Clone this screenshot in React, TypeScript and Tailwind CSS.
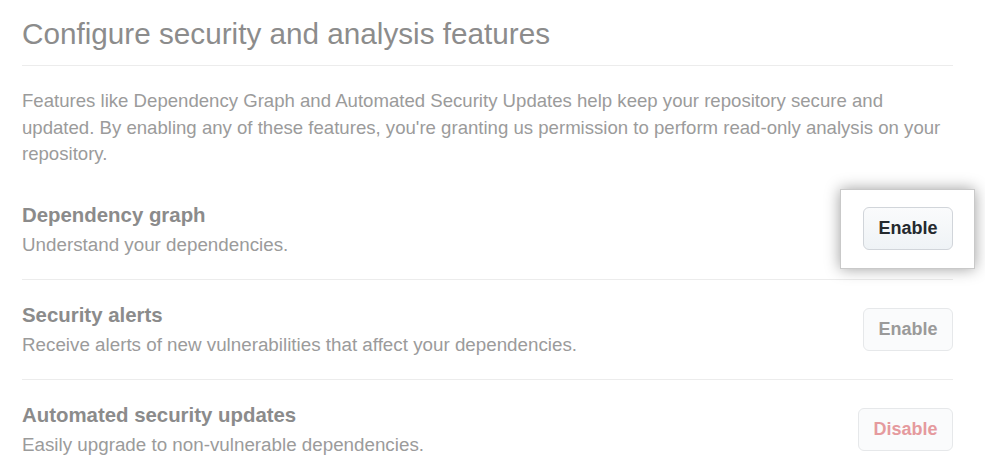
import React from 'react';

const features = [
  {
    title: 'Dependency graph',
    desc: 'Understand your dependencies.',
    action: 'Enable',
    kind: 'focus',
  },
  {
    title: 'Security alerts',
    desc: 'Receive alerts of new vulnerabilities that affect your dependencies.',
    action: 'Enable',
    kind: 'muted',
  },
  {
    title: 'Automated security updates',
    desc: 'Easily upgrade to non-vulnerable dependencies.',
    action: 'Disable',
    kind: 'danger',
  },
];

const ActionButton = ({ label, kind }: { label: string; kind: string }) => {
  if (kind === 'focus') {
    return (
      <div className="relative">
        <div className="absolute -top-[18px] -bottom-[19px] -left-[23px] -right-[22px] bg-white border border-[#c9c9c9] shadow-[0_0_14px_rgba(0,0,0,0.38)]" />
        <button className="relative h-[43px] w-[90px] rounded-[6px] border border-[#d1d5da] bg-gradient-to-b from-[#fafbfc] to-[#eff3f6] text-[18px] font-bold text-[#24292e]">
          {label}
        </button>
      </div>
    );
  }
  if (kind === 'danger') {
    return (
      <button className="h-[43px] w-[95px] rounded-[6px] border border-[#e6e8ea] bg-[#fafbfc] text-[18px] font-bold text-[#e59a9e]">
        {label}
      </button>
    );
  }
  return (
    <button className="h-[43px] w-[90px] rounded-[6px] border border-[#e6e8ea] bg-[#fafbfc] text-[18px] font-bold text-[#9a9a9a]">
      {label}
    </button>
  );
};

export default function App() {
  return (
    <div className="w-[985px] h-[475px] overflow-hidden bg-white font-['Liberation_Sans',Arial,sans-serif]">
      <div className="w-[931px] ml-[22px]">
        <div className="pt-[15px] pb-[12px] border-b border-[#ececec]">
          <h2 className="text-[29.7px] leading-[38px] font-normal text-[#8c8c8c]">
            Configure security and analysis features
          </h2>
        </div>
        <p className="mt-[22px] mb-[11px] whitespace-nowrap text-[18.6px] leading-[26.5px] text-[#9b9b9b]">
          Features like Dependency Graph and Automated Security Updates help keep your repository secure and
          <br />
          updated. By enabling any of these features, you're granting us permission to perform read-only analysis on your
          <br />
          repository.
        </p>
        {features.map((f, i) => (
          <div
            key={f.title}
            className={`h-[100px] flex items-center justify-between ${i > 0 ? 'border-t border-[#ececec]' : ''}`}
          >
            <div className="pt-[2px]">
              <div className="text-[20.4px] leading-[29px] font-bold text-[#8b8b8b]">{f.title}</div>
              <div className="text-[18.8px] leading-[29px] text-[#9b9b9b]">{f.desc}</div>
            </div>
            <ActionButton label={f.action} kind={f.kind} />
          </div>
        ))}
      </div>
    </div>
  );
}
